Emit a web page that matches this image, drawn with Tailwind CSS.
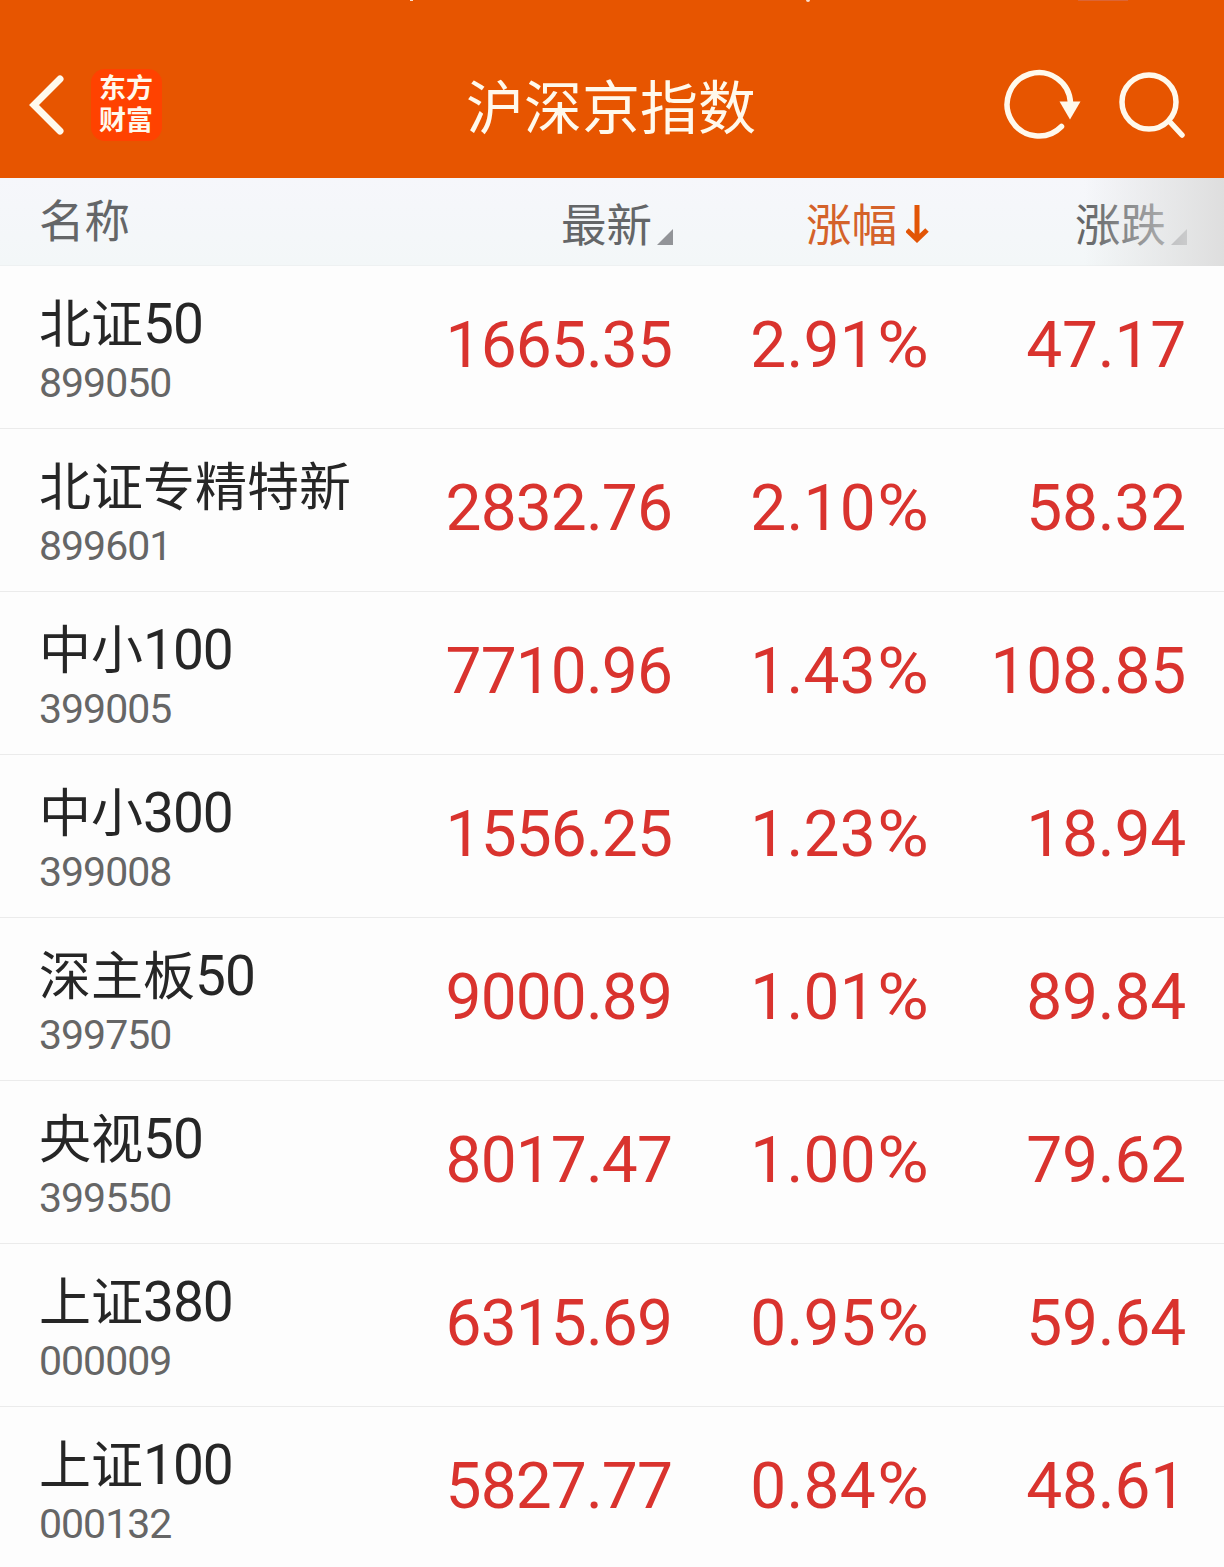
<!DOCTYPE html>
<html lang="zh-CN">
<head>
  <meta charset="UTF-8" />
  <title>沪深京指数</title>
  <script src="https://cdn.jsdelivr.net/npm/@tailwindcss/browser@4"></script>
</head>
<body class="bg-[#fdfdfd] font-['Roboto','Noto_Sans_CJK_SC',sans-serif]">
  <div class="w-[1224px] h-[1567px] overflow-hidden">
    <header class="relative h-[178px] bg-[#e75500] flex items-center justify-between pl-7 pr-[39px] pt-[31px] text-[#fff9ec]">
      <!-- bottom edge of the status bar -->
      <div class="absolute top-0 left-[410px] w-[3px] h-px bg-white/80"></div>
      <div class="absolute top-0 left-[806px] w-[4px] h-[2px] rounded-b bg-white/80"></div>
      <div class="absolute top-0 left-[1078px] w-[50px] h-px bg-[#dc6535]"></div>

      <div class="flex items-center">
        <svg class="w-9 h-[60px]" viewBox="0 0 36 60" fill="none" stroke="currentColor" stroke-width="7" stroke-linecap="round" stroke-linejoin="miter">
          <path d="M32 4 6 30l26 26" />
        </svg>
        <div class="ml-[27px] w-[71px] h-[72px] rounded-[14px] bg-[#ff4200] flex flex-col items-center justify-center text-[27px] leading-8 font-bold">
          <span class="-ml-px">东方</span>
          <span class="-ml-px">财富</span>
        </div>
      </div>

      <h1 class="absolute left-0 right-[2px] top-[66px] text-center text-[58px] leading-[86px]">沪深京指数</h1>

      <div class="flex items-center gap-[34px]">
        <svg class="w-20 h-[72px]" viewBox="0 0 80 72" fill="none" stroke="currentColor" stroke-width="5.5" stroke-linecap="round">
          <path d="M58.5 57.5A31.7 31.7 0 1 1 67.5 34" />
          <path d="M56.5 32.5h21L67 50.5z" fill="currentColor" stroke="none" />
        </svg>
        <svg class="w-[68px] h-[68px]" viewBox="0 0 68 68" fill="none" stroke="currentColor" stroke-width="5.5" stroke-linecap="round">
          <circle cx="32" cy="31" r="27" />
          <path d="m53 51 12 13" />
        </svg>
      </div>
    </header>

    <div class="relative h-[88px] bg-linear-to-b from-[#f6f7fb] to-[#f3f7f8] border-b border-[#eef1f2] grid grid-cols-[380px_293px_257px_257px] text-[45.5px] leading-[66px] text-[#646668]">
      <div class="pl-[39px] pt-3">名称</div>
      <div class="flex justify-end pt-4">最新
        <svg class="w-4 h-4 mt-[35px] ml-[5px]" viewBox="0 0 16 16" fill="#929498"><path d="M16 0v16H0z" /></svg>
      </div>
      <div class="flex justify-end pt-4 text-[#d4622a]">涨幅
        <svg class="w-6 h-10 mt-[10px] ml-[9px]" viewBox="0 0 24 40" fill="none" stroke="#e25506" stroke-width="5"><path d="M11 1v34M1 26l10 9.5L21 26" /></svg>
      </div>
      <div class="flex justify-end pt-4">涨跌
        <svg class="w-4 h-4 mt-[35px] ml-[5px]" viewBox="0 0 16 16" fill="#929498"><path d="M16 0v16H0z" /></svg>
      </div>
      <!-- fade hinting at more columns to the right -->
      <div class="absolute right-0 top-0 w-[140px] h-[88px] bg-linear-to-r from-[#dedede]/0 via-[#dedede]/50 to-[#dedede]"></div>
    </div>

    <div id="rows"></div>
  </div>

  <script>
    const indices = [
      ["北证", "50", "899050", "1665.35", "2.91", "47.17"],
      ["北证专精特新", "", "899601", "2832.76", "2.10", "58.32"],
      ["中小", "100", "399005", "7710.96", "1.43", "108.85"],
      ["中小", "300", "399008", "1556.25", "1.23", "18.94"],
      ["深主板", "50", "399750", "9000.89", "1.01", "89.84"],
      ["央视", "50", "399550", "8017.47", "1.00", "79.62"],
      ["上证", "380", "000009", "6315.69", "0.95", "59.64"],
      ["上证", "100", "000132", "5827.77", "0.84", "48.61"],
    ];

    document.getElementById("rows").innerHTML = indices.map(([name, num, code, last, pct, change]) => `
      <div class="h-[163px] border-b border-[#ebebeb] grid grid-cols-[380px_293px_257px_257px] text-[64px] leading-[160px] tracking-[-0.9px] text-[#d9332e] text-right">
        <div class="pl-[39px] pt-[21px] text-left whitespace-nowrap tracking-normal">
          <div class="h-[72px] text-[52px] leading-[74px] text-[#262626]">${name}<span class="text-[55px] tracking-[-1px]">${num}</span></div>
          <div class="text-[41px] leading-[48px] tracking-[-1px] text-[#666]">${code}</div>
        </div>
        <div class="pr-px">${last}</div>
        <div class="pr-px tracking-[0.2px]">${pct}<span class="inline-block ml-[6px] origin-right scale-x-110">%</span></div>
        <div class="pr-px tracking-[-0.2px]">${change}</div>
      </div>`).join("");
  </script>
</body>
</html>
